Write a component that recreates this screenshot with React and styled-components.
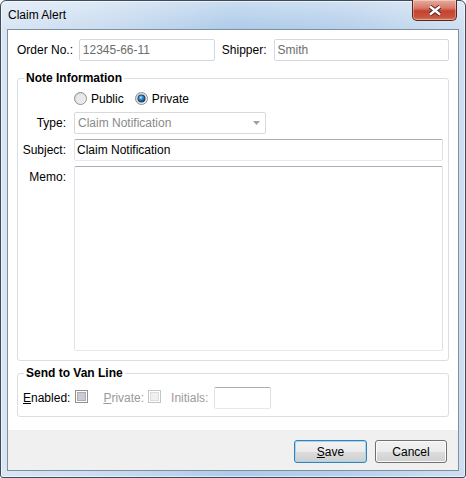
import React from 'react'
import styled, { createGlobalStyle } from 'styled-components'

const GlobalStyle = createGlobalStyle`
  html, body { margin:0; padding:0; background:#fff; }
  body { font-family:"Liberation Sans", Arial, sans-serif; font-size:12px; color:#000; }
  * { box-sizing:border-box; }
`

const Window = styled.div`
  width:466px;
  height:478px;
  display:flex;
  flex-direction:column;
  padding:0 6px 6px;
  border:1px solid #3f4b5b;
  border-radius:6px 6px 3px 3px;
  background:
    linear-gradient(180deg, rgba(255,255,255,0.35) 0px, rgba(255,255,255,0) 28px),
    linear-gradient(90deg, #d9e6f4 0%, #c8dbef 25%, #aecbe9 50%, #b7d0eb 75%, #cfdff1 100%);
  box-shadow:inset 0 0 0 1px rgba(255,255,255,0.55);
`

const TitleBar = styled.div`
  height:28px;
  display:flex;
  align-items:flex-start;
  justify-content:space-between;
`

const Title = styled.div`
  padding:7px 0 0 1px;
  line-height:14px;
  font-size:12px;
`

const CloseButton = styled.div`
  width:45px;
  height:21px;
  margin:-1px 2px 0 0;
  display:flex;
  align-items:center;
  justify-content:center;
  border:1px solid #5a231b;
  border-top:none;
  border-radius:0 0 5px 5px;
  background:linear-gradient(180deg, #e7ac9f 0%, #d87a68 40%, #c4432f 55%, #c8533c 85%, #d77a5c 100%);
  box-shadow:inset 0 0 0 1px rgba(255,255,255,0.35);
`

const Client = styled.div`
  flex:1;
  display:flex;
  flex-direction:column;
  border:1px solid #7f8fa3;
  background:#f0f0f0;
`

const Content = styled.div`
  height:400px;
  background:#fff;
  padding:9px 9px 0;
`

const Footer = styled.div`
  flex:1;
  display:flex;
  justify-content:flex-end;
  align-items:flex-start;
  gap:8px;
  padding:10px 11px 0 0;
`

const TopRow = styled.div`
  display:flex;
  align-items:center;
  height:22px;
`

const Label = styled.span`
  display:inline-block;
  width:${p => (p.$w ? `${p.$w}px` : 'auto')};
  margin-left:${p => p.$ml || 0}px;
  color:${p => (p.$disabled ? '#9a9a9a' : '#000')};
  line-height:14px;
  white-space:nowrap;
`

const TextBox = styled.input`
  width:${p => p.$w}px;
  height:22px;
  margin:0 0 0 ${p => p.$ml || 0}px;
  padding:0 ${p => (p.$readOnlyLook ? 3 : 2)}px;
  font:12px "Liberation Sans", Arial, sans-serif;
  color:${p => (p.$readOnlyLook ? '#6d6d6d' : '#000')};
  background:#fff;
  border:1px solid;
  border-color:${p => (p.$readOnlyLook ? '#d5d9df' : '#abadb3 #dbdfe6 #e3e9ef #e2e3ea')};
  border-radius:2px;
  outline:none;
`

const Group = styled.fieldset`
  margin:${p => p.$mt}px 0 0;
  padding:0 5px ${p => p.$pb}px 0;
  min-width:0;
  border:1px solid #d9dee3;
  border-radius:3px;
`

const Legend = styled.legend`
  margin-left:6px;
  padding:0 2px;
  font-weight:bold;
  line-height:14px;
`

const FormGrid = styled.div`
  display:grid;
  grid-template-columns:48px 1fr;
  column-gap:8px;
  row-gap:5px;
  margin-top:5px;
`

const RowLabel = styled.div`
  text-align:right;
  line-height:14px;
  padding-top:${p => (p.$top ? 4 : 0)}px;
  align-self:${p => (p.$top ? 'start' : 'center')};
  white-space:nowrap;
`

const RadioRow = styled.div`
  grid-column:2;
  height:17px;
  display:flex;
  align-items:center;
  gap:11px;
`

const Choice = styled.label`
  display:flex;
  align-items:center;
  gap:4px;
  line-height:14px;
`

const Combo = styled.div`
  width:192px;
  height:22px;
  display:flex;
  align-items:center;
  justify-content:space-between;
  padding:0 5px 0 3px;
  color:#8a8a8a;
  border:1px solid #d9d9d9;
  border-radius:2px;
  background:#fff;
`

const Memo = styled.textarea`
  height:185px;
  margin:0;
  padding:2px;
  resize:none;
  font:12px "Liberation Sans", Arial, sans-serif;
  border:1px solid;
  border-color:#abadb3 #dbdfe6 #e3e9ef #e2e3ea;
  border-radius:2px;
  outline:none;
`

const VanRow = styled.div`
  display:flex;
  align-items:center;
  height:22px;
  margin-top:7px;
  padding-left:5px;
`

const Button = styled.button`
  width:${p => p.$w}px;
  height:23px;
  padding:0;
  font:12px "Liberation Sans", Arial, sans-serif;
  color:#000;
  border:1px solid ${p => (p.$default ? '#3c7fb1' : '#707070')};
  border-radius:3px;
  background:linear-gradient(180deg, #f2f2f2 0%, #ebebeb 50%, #dddddd 51%, #cfcfcf 100%);
  box-shadow:inset 0 0 0 1px ${p => (p.$default ? '#9fd8f6' : '#fbfbfb')};
`

const U = styled.span`
  text-decoration:underline;
`

const CloseGlyph = () => (
  <svg width="16" height="11" viewBox="0 0 16 11">
    <path d="M3 1.5 L13 9.5 M13 1.5 L3 9.5" stroke="#4d2019" strokeWidth="4.2" />
    <path d="M3 1.5 L13 9.5 M13 1.5 L3 9.5" stroke="#fff" strokeWidth="2.4" />
  </svg>
)

const Radio = ({ id, checked }) => (
  <svg width="13" height="13" viewBox="0 0 13 13">
    <defs>
      <linearGradient id={`${id}-ring`} x1="0" y1="0" x2="1" y2="1">
        <stop offset="0" stopColor="#d0d0d0" />
        <stop offset="1" stopColor="#fbfbfb" />
      </linearGradient>
      <radialGradient id={`${id}-dot`} cx="0.4" cy="0.35" r="0.7">
        <stop offset="0" stopColor="#bfe9ff" />
        <stop offset="0.45" stopColor="#2f8ad0" />
        <stop offset="1" stopColor="#0f3f6e" />
      </radialGradient>
    </defs>
    <circle cx="6.5" cy="6.5" r="6" fill={`url(#${id}-ring)`} stroke="#8e8f8f" />
    <circle cx="6.5" cy="6.5" r="4" fill={checked ? '#2b3e52' : '#e9e9e9'} />
    {checked && <circle cx="6.5" cy="6.5" r="3.2" fill={`url(#${id}-dot)`} />}
  </svg>
)

const Check = ({ disabled }) => (
  <svg width="13" height="13" viewBox="0 0 13 13">
    <rect x="0.5" y="0.5" width="12" height="12" fill="#fff" stroke={disabled ? '#c4c4c4' : '#8e8f8f'} />
    <rect x="2.5" y="2.5" width="8" height="8" fill={disabled ? '#f0f0f0' : '#c9ccd0'} stroke={disabled ? '#dcdcdc' : '#a9adb2'} />
  </svg>
)

const ComboArrow = () => (
  <svg width="7" height="4" viewBox="0 0 7 4">
    <path d="M0 0 H7 L3.5 4 Z" fill="#a0a0a0" />
  </svg>
)

export default function App() {
  return (
    <>
      <GlobalStyle />
      <Window>
        <TitleBar>
          <Title>Claim Alert</Title>
          <CloseButton>
            <CloseGlyph />
          </CloseButton>
        </TitleBar>
        <Client>
          <Content>
            <TopRow>
              <Label $w={62}>Order No.:</Label>
              <TextBox $w={136} $readOnlyLook readOnly value="12345-66-11" />
              <Label $w={52} $ml={7}>Shipper:</Label>
              <TextBox $w={176} $readOnlyLook readOnly value="Smith" />
            </TopRow>

            <Group $mt={10} $pb={9}>
              <Legend>Note Information</Legend>
              <FormGrid>
                <RadioRow>
                  <Choice>
                    <Radio id="pub" />
                    Public
                  </Choice>
                  <Choice>
                    <Radio id="priv" checked />
                    Private
                  </Choice>
                </RadioRow>
                <RowLabel>Type:</RowLabel>
                <Combo>
                  <span>Claim Notification</span>
                  <ComboArrow />
                </Combo>
                <RowLabel>Subject:</RowLabel>
                <TextBox readOnly value="Claim Notification" style={{ width: '100%' }} />
                <RowLabel $top>Memo:</RowLabel>
                <Memo readOnly value="" />
              </FormGrid>
            </Group>

            <Group $mt={5} $pb={7}>
              <Legend>Send to Van Line</Legend>
              <VanRow>
                <Label>
                  <U>E</U>nabled:
                </Label>
                <Label $ml={5}>
                  <Check />
                </Label>
                <Label $ml={15} $disabled>
                  <U>P</U>rivate:
                </Label>
                <Label $ml={4}>
                  <Check disabled />
                </Label>
                <Label $ml={10} $disabled>Initials:</Label>
                <TextBox $w={57} $ml={6} readOnly value="" />
              </VanRow>
            </Group>
          </Content>
          <Footer>
            <Button $w={73} $default>
              <U>S</U>ave
            </Button>
            <Button $w={72}>Cancel</Button>
          </Footer>
        </Client>
      </Window>
    </>
  )
}
